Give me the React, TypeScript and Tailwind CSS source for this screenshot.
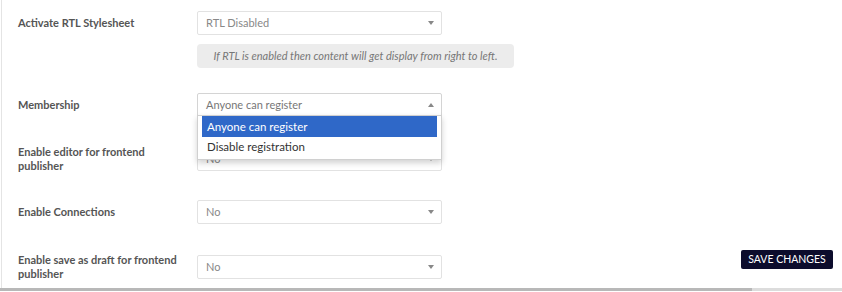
import React from 'react';

const Arrow = ({ up = false }: { up?: boolean }) => (
  <svg width="6" height="4" viewBox="0 0 6 4" className="shrink-0">
    {up ? <path d="M0 4 L3 0 L6 4 Z" fill="#888" /> : <path d="M0 0 L3 4 L6 0 Z" fill="#888" />}
  </svg>
);

const Select = ({ value }: { value: string }) => (
  <div className="w-[245px] h-[24px] shrink-0 border border-[#e2e2e2] bg-white rounded-[2px] flex items-center justify-between pl-[8px] pr-[7px]">
    <span className="text-[#888]">{value}</span>
    <Arrow />
  </div>
);

const Label = ({ children }: { children: React.ReactNode }) => (
  <div className="w-[195px] shrink-0 pl-[16px] font-bold text-[#555] leading-[14px]">{children}</div>
);

export default function App() {
  return (
    <div
      className="w-[842px] h-[292px] bg-white text-[11px] flex flex-col overflow-hidden"
      style={{ fontFamily: 'Lato, "Noto Sans", sans-serif' }}
    >
      <div className="flex-1 ml-[1px] border-l border-[#e4e4e4] flex flex-col">
        {/* RTL */}
        <div className="flex items-center mt-[11px]">
          <Label>Activate RTL Stylesheet</Label>
          <Select value="RTL Disabled" />
        </div>
        <div className="ml-[195px] mt-[9px] w-[317px] h-[24px] rounded-[4px] bg-[#ececec] flex items-center justify-center italic text-[#777]">
          If RTL is enabled then content will get display from right to left.
        </div>

        {/* Membership */}
        <div className="flex items-center mt-[25px] relative z-10">
          <Label>Membership</Label>
          <div className="relative shrink-0">
            <div className="w-[245px] h-[24px] border border-[#d4d4d4] bg-white rounded-t-[2px] flex items-center justify-between pl-[8px] pr-[7px]">
              <span className="text-[#777]">Anyone can register</span>
              <Arrow up />
            </div>
            <div className="absolute left-0 top-[22px] w-[245px] bg-white border border-[#d0d0d0] shadow-[0_3px_6px_rgba(0,0,0,0.18)] px-[4px] pb-[2px] flex flex-col">
              <div className="h-[21px] bg-[#2f68c8] text-white flex items-center pl-[5px] text-[11.5px]">Anyone can register</div>
              <div className="h-[20px] text-[#333] flex items-center pl-[5px] text-[11.5px]">Disable registration</div>
            </div>
          </div>
        </div>

        {/* Editor */}
        <div className="flex items-center mt-[28px]">
          <Label>
            Enable editor for frontend
            <br />
            publisher
          </Label>
          <Select value="No" />
        </div>

        {/* Connections */}
        <div className="flex items-center mt-[27px]">
          <Label>Enable Connections</Label>
          <Select value="No" />
        </div>

        {/* Save draft */}
        <div className="flex items-center mt-[29px]">
          <Label>
            Enable save as draft for frontend
            <br />
            publisher
          </Label>
          <Select value="No" />
          <div className="ml-auto self-start -mt-[3px] mr-[9px]">
            <button className="w-[92px] h-[19px] bg-[#0c0c2c] text-white rounded-[2px] text-[10.5px] uppercase flex items-center justify-center">
              Save Changes
            </button>
          </div>
        </div>
      </div>
      <div className="flex h-[3px] mb-[1px]">
        <div className="w-[752px] bg-[#b8b8b8]" />
        <div className="flex-1 bg-[#dcdcdc]" />
      </div>
    </div>
  );
}
